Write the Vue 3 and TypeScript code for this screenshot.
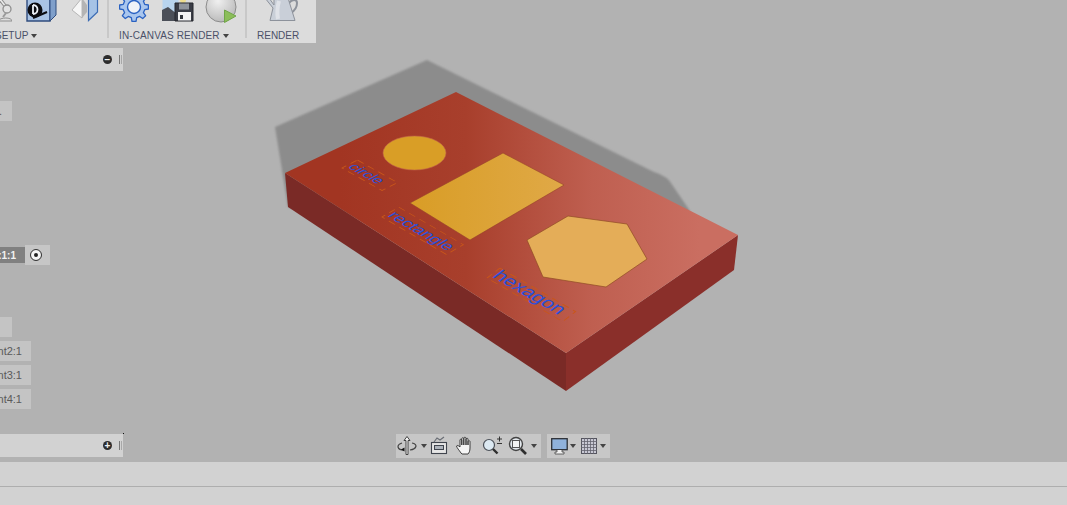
<script setup lang="ts">
interface Engraving {
  label: string;
  matrix: string;
  w: number;
  h: number;
  size: number;
}

// text sits on the top face of the board, so each label gets its own skew
const engravings: Engraving[] = [
  { label: 'circle', matrix: 'matrix(0.87 0.49 -0.86 0.44 342 168)', w: 46, h: 18, size: 15 },
  { label: 'rectangle', matrix: 'matrix(0.86 0.5 -0.8 0.47 382 217)', w: 75, h: 21, size: 17 },
  { label: 'hexagon', matrix: 'matrix(0.87 0.5 -0.72 0.55 487 278)', w: 87, h: 18, size: 20 },
];

const treeRows = ['Component2:1', 'Component3:1', 'Component4:1'];

// 8 teeth around the centre of the settings icon
function gearPath(cx: number, cy: number, outer: number, inner: number): string {
  const pts: string[] = [];
  for (let i = 0; i < 8; i++) {
    const a = (i / 8) * Math.PI * 2;
    const step = Math.PI / 8;
    const corners: [number, number][] = [
      [inner, a - step * 0.62],
      [outer, a - step * 0.36],
      [outer, a + step * 0.36],
      [inner, a + step * 0.62],
    ];
    for (const [r, t] of corners) {
      pts.push(`${(cx + r * Math.cos(t)).toFixed(1)} ${(cy + r * Math.sin(t)).toFixed(1)}`);
    }
  }
  return `M${pts.join('L')}Z`;
}

const gear = gearPath(15, 7, 14.500, 11);
</script>

<template>
  <div class="app">
    <main class="viewport">
      <svg class="scene" viewBox="0 0 1067 462" width="1067" height="462">
        <defs>
          <linearGradient id="topFace" gradientUnits="userSpaceOnUse" x1="340" y1="190" x2="700" y2="190">
            <stop offset="0" stop-color="#a23522" />
            <stop offset="0.35" stop-color="#a83f2c" />
            <stop offset="0.7" stop-color="#bf5f50" />
            <stop offset="1" stop-color="#ca6e61" />
          </linearGradient>
          <linearGradient id="inlay" gradientUnits="userSpaceOnUse" x1="400" y1="190" x2="650" y2="190">
            <stop offset="0" stop-color="#d89c24" />
            <stop offset="0.5" stop-color="#dea63e" />
            <stop offset="1" stop-color="#e5ae5c" />
          </linearGradient>
          <filter id="soft" x="-5%" y="-5%" width="110%" height="110%">
            <feGaussianBlur stdDeviation="0.8" />
          </filter>
        </defs>

        <path
          d="M275 127L427 60L654 172Q668 176 673 186L690 211L600 260L288 207Z"
          fill="#8c8c8c"
          filter="url(#soft)"
        />
        <polygon points="285,173 566,353 566,391 288,207" fill="#7a2a26" />
        <polygon points="566,353 738,235 734,270 566,391" fill="#8a2f2a" />
        <polygon points="285,173 456,92 738,235 566,353" fill="url(#topFace)" />

        <ellipse cx="414.5" cy="153" rx="31.5" ry="17" fill="#d99e26" stroke="#c0614a" stroke-width="0.6" />
        <polygon points="410,203 503,153 564,185 470,240" fill="url(#inlay)" stroke="#96402a" stroke-width="0.6" />
        <polygon
          points="527,240 568,216 627,224 647,259 606,287 543,277"
          fill="#e4ad58"
          stroke="#8f4a24"
          stroke-width="0.7"
        />

        <g v-for="item in engravings" :key="item.label" :transform="item.matrix">
          <rect
            x="0"
            :y="-item.h"
            :width="item.w"
            :height="item.h"
            fill="none"
            stroke="#c9571a"
            stroke-width="1"
            stroke-dasharray="7 5"
          />
          <text class="engraved" x="2" y="-4" :font-size="item.size">{{ item.label }}</text>
        </g>
      </svg>

      <!-- ribbon, cut off on the left and top like in the app window -->
      <div class="ribbon">
        <section class="group group-setup">
          <div class="icons">
            <svg class="lamp" width="32" height="24" viewBox="0 0 32 24">
              <path d="M19 -2L26 7" stroke="#8f8f8f" stroke-width="3.500" />
              <path d="M19 -2L26 7" stroke="#ececec" stroke-width="1.500" />
              <circle cx="27" cy="9" r="4" fill="#e2e2e2" stroke="#8f8f8f" stroke-width="1.300" />
              <path d="M26 13L23 17" stroke="#9a9a9a" stroke-width="2" />
              <path d="M18 21C20 17 32 17 32 21Z" fill="#dedede" stroke="#8f8f8f" />
            </svg>
            <svg class="cube" width="32" height="23" viewBox="0 0 32 23">
              <path d="M1 -2H24V21H1Z" fill="#a9c3e4" stroke="#2f4c7e" stroke-width="1.400" />
              <path d="M24 21L30 15V-2H24Z" fill="#7f9fca" stroke="#2f4c7e" />
              <circle cx="9" cy="10" r="7.500" fill="#0c0c10" />
              <path d="M7 5V14M7 5C13 5 13 14 7 14" fill="none" stroke="#eef2f8" stroke-width="1.800" />
              <path d="M7 18L21 12" stroke="#0c0c10" stroke-width="2" />
            </svg>
            <svg class="mirror" width="28" height="23" viewBox="0 0 28 23">
              <path d="M1 10L11 -2V18Z" fill="#f6f6f6" stroke="#a8a8a8" stroke-width="0.800" />
              <path d="M11 -2L16 5V12L11 18Z" fill="#b4b4b4" />
              <path d="M17.500 -2H26.500V12L17.500 20.500Z" fill="#a6c3e6" stroke="#3c6cb4" stroke-width="1.200" />
            </svg>
          </div>
          <div class="label">SETUP<i class="caret"></i></div>
        </section>
        <section class="group group-canvas">
          <div class="icons">
            <svg class="gear" width="30" height="23" viewBox="0 0 30 23">
              <path :d="gear" fill="#a9c6ee" stroke="#2a62c2" stroke-width="1.300" stroke-linejoin="round" />
              <circle cx="15" cy="7" r="6.500" fill="#f0f3f8" stroke="#2a62c2" stroke-width="1.400" />
            </svg>
            <svg class="save" width="32" height="22" viewBox="0 0 32 22">
              <rect x="0.500" y="-2" width="16" height="23" fill="#b8d4ee" />
              <circle cx="21" cy="0" r="3" fill="#eddc8e" />
              <path d="M0 21V10L6 7L15 14V21Z" fill="#4b4f58" />
              <path d="M13 3H31V21H13Z" fill="#3a3d46" stroke="#24262c" />
              <rect x="17" y="3.500" width="10" height="6" fill="#8f949c" />
              <rect x="16" y="12" width="13" height="8.500" fill="#f2f2f2" />
              <rect x="18" y="15" width="3" height="4" fill="#33363c" />
            </svg>
            <svg class="sphere" width="32" height="24" viewBox="0 0 32 24">
              <defs>
                <radialGradient id="ball" cx="0.4" cy="0.3" r="0.8">
                  <stop offset="0" stop-color="#f0f0f0" />
                  <stop offset="1" stop-color="#b4b4b4" />
                </radialGradient>
              </defs>
              <circle cx="16" cy="7" r="15" fill="url(#ball)" stroke="#8c8c8c" />
              <path d="M19.500 10L31 16L19.500 22.500Z" fill="#8cbe5a" stroke="#70a548" />
            </svg>
          </div>
          <div class="label">IN-CANVAS RENDER<i class="caret"></i></div>
        </section>
        <section class="group group-render">
          <div class="icons">
            <svg class="pot" width="34" height="23" viewBox="0 0 34 23">
              <path d="M25 3C28 -1 33 -1 33 3C33 8 30 11 27 13" fill="none" stroke="#8d929b" stroke-width="2" />
              <path d="M1 -2H5L10 5L10 -2H24L31 20.500H6L9 8Z" fill="#c9cfd8" stroke="#8d929b" />
              <path d="M15 1C13 8 13 14 14 19" stroke="#dfe2e8" stroke-width="4" fill="none" />
            </svg>
          </div>
          <div class="label">RENDER</div>
        </section>
      </div>

      <!-- browser tree -->
      <aside class="tree">
        <div class="panel-head">
          <span class="round-btn">−</span>
          <span class="grip"></span>
        </div>
        <div class="row row-short row-first"><span>Origin.</span></div>
        <div class="row-active">
          <span class="active-name">Base:1:1</span>
          <span class="target"><b></b></span>
        </div>
        <div class="row row-short row-comp"></div>
        <div v-for="name in treeRows" :key="name" class="row row-wide">
          <span>{{ name }}</span>
        </div>
        <div class="panel-head panel-foot">
          <span class="round-btn">+</span>
          <span class="grip"></span>
        </div>
      </aside>

      <!-- navigation bar -->
      <nav class="navbar">
        <div class="nav-group nav-main">
          <svg class="orbit" width="20" height="20" viewBox="0 0 20 20">
            <path d="M5 7C-1 9 0 14 7 14M15 7C21 8 20 13 13 14" fill="none" stroke="#444" stroke-width="1.200" />
            <path d="M10 0.500L7 4.500H9V18.500H11V4.500H13Z" fill="#f4f4f4" stroke="#333" stroke-width="0.900" />
            <path d="M7.500 11.500V15.500L4 13.500Z" fill="#111" />
          </svg>
          <i class="caret c-orbit"></i>
          <svg class="film" width="20" height="20" viewBox="0 0 20 20">
            <rect x="2.500" y="6.500" width="15" height="11" fill="#e6e6e6" stroke="#40454e" stroke-width="1.100" />
            <rect x="5.500" y="9.500" width="9" height="4" fill="#aeb4bc" stroke="#40454e" />
            <path d="M5 6L8 2L11 4L15 1" fill="none" stroke="#6b6f76" stroke-width="1.200" />
          </svg>
          <svg class="hand" width="20" height="20" viewBox="0 0 20 20">
            <path
              d="M6 17C4 14 2 12 1.500 10C2 9 3.500 9.500 5 11V4C5 3 6.500 3 6.800 4V9V2.500C7 1.500 8.500 1.500 8.800 2.500V9V2C9 1 10.800 1 11 2V9V3C11.200 2 13 2 13 3V9V5.500C13.200 4.500 15 4.500 15 5.500V12C15 15 14 17 13 18H7Z"
              fill="#f6f6f6"
              stroke="#2e2e2e"
              stroke-width="0.900"
            />
          </svg>
          <svg class="zoom-pm" width="22" height="20" viewBox="0 0 22 20">
            <circle cx="8" cy="9" r="5.500" fill="#dce9f2" stroke="#4a4f57" stroke-width="1.200" />
            <path d="M12 13L16.500 17.500" stroke="#2e2e2e" stroke-width="2.400" />
            <path d="M16 3H21M18.500 0.500V5.500M16 7.500H21" stroke="#333" stroke-width="1" />
          </svg>
          <svg class="zoom-win" width="20" height="20" viewBox="0 0 20 20">
            <circle cx="8" cy="8" r="6.500" fill="#e4e9ee" stroke="#444" stroke-width="1.400" />
            <rect x="4.500" y="4.500" width="7" height="7" fill="#f3f3f3" stroke="#555" />
            <path d="M13 13L18 18" stroke="#2e2e2e" stroke-width="2.600" />
          </svg>
          <i class="caret c-zoom"></i>
        </div>
        <div class="nav-group nav-display">
          <svg class="display" width="17" height="18" viewBox="0 0 17 18">
            <rect x="0.700" y="1.700" width="15.500" height="11" fill="#8fb2dc" stroke="#2b2f36" stroke-width="1.300" />
            <path d="M6 13V15H4V17H13V15H11V13" fill="#f0f0f0" stroke="#444" stroke-width="0.800" />
          </svg>
          <i class="caret c-display"></i>
          <svg class="grid-icon" width="16" height="16" viewBox="0 0 16 16">
            <rect x="0.500" y="0.500" width="15" height="15" fill="#c8c8d4" stroke="#55555f" />
            <path d="M3.500 0V16M6.500 0V16M9.500 0V16M12.500 0V16M0 3.500H16M0 6.500H16M0 9.500H16M0 12.500H16" stroke="#63636e" stroke-width="0.800" />
          </svg>
          <i class="caret c-grid"></i>
        </div>
      </nav>
    </main>
    <footer class="status-bar"></footer>
    <footer class="time-bar"></footer>
  </div>
</template>

<style scoped>
.app {
  display: flex;
  flex-direction: column;
  width: 1067px;
  height: 505px;
  overflow: hidden;
  font-family: "Liberation Sans", Arial, sans-serif;
}

.viewport {
  position: relative;
  height: 462px;
  background: #b2b2b2;
  overflow: hidden;
}

.scene {
  display: block;
}

.engraved {
  font-family: "Liberation Sans", Arial, sans-serif;
  fill: #2a50dc;
}

.ribbon {
  position: absolute;
  top: 0;
  left: 0;
  display: flex;
  width: 316px;
  height: 43px;
  background: #dcdcdc;
}

.group {
  flex: none;
  height: 38px;
  border-right: 2px solid #c8c8c8;
}

.group-setup {
  width: 107px;
}

.group-canvas {
  width: 136px;
}

.group-render {
  flex: 1;
  border-right: none;
}

.icons {
  display: flex;
  align-items: flex-start;
  height: 26px;
}

.lamp {
  flex: none;
  margin-left: -20px;
}

.cube {
  margin-left: 14px;
}

.mirror {
  margin-left: 13px;
}

.gear {
  margin-left: 10px;
}

.save {
  margin-left: 13px;
}

.sphere {
  margin-left: 11px;
}

.pot {
  margin-left: 17px;
}

.label {
  display: flex;
  align-items: center;
  height: 13px;
  margin-top: 3px;
  font-size: 10px;
  color: #4b5068;
  white-space: nowrap;
}

.group-setup .label {
  margin-left: -5px;
}

.group-canvas .label {
  margin-left: 10px;
  letter-spacing: 0.12px;
}

.group-render .label {
  margin-left: 10px;
}

.caret {
  display: inline-block;
  flex: none;
  width: 0;
  height: 0;
  margin-left: 3px;
  border-left: 3.500px solid transparent;
  border-right: 3.500px solid transparent;
  border-top: 4px solid #444;
}

.tree {
  position: absolute;
  top: 48px;
  left: 0;
  display: flex;
  flex-direction: column;
  align-items: flex-start;
  width: 124px;
  height: 409px;
}

.panel-head {
  position: relative;
  display: flex;
  align-items: center;
  justify-content: flex-end;
  gap: 7px;
  width: 123px;
  height: 23px;
  padding-right: 1px;
  box-sizing: border-box;
  background: #d2d2d2;
}

.panel-foot {
  margin-top: auto;
}

.panel-foot::after {
  content: "";
  position: absolute;
  top: -1px;
  right: -1px;
  width: 1px;
  height: 1px;
  background: #111;
}

.round-btn {
  display: flex;
  align-items: center;
  justify-content: center;
  width: 9px;
  height: 9px;
  border-radius: 50%;
  background: #2c2c2c;
  color: #f0f0f0;
  font-size: 10px;
  font-weight: bold;
  line-height: 1;
}

.grip {
  width: 1px;
  height: 9px;
  border-left: 1px solid #777;
  border-right: 1px solid #a8a8a8;
}

.row {
  display: flex;
  justify-content: flex-end;
  align-items: center;
  height: 20px;
  padding-right: 9px;
  box-sizing: border-box;
  overflow: hidden;
  background: #c4c4c4;
  color: #5a5a5a;
  font-size: 11px;
  white-space: nowrap;
}

.row-short {
  width: 12px;
  padding-right: 10px;
}

.row-wide {
  width: 31px;
  margin-top: 4px;
}

.row-first {
  margin-top: 30px;
}

.row-comp {
  margin-top: 52px;
}

.row-active {
  display: flex;
  align-items: center;
  margin-top: 124px;
  height: 20px;
}

.active-name {
  display: flex;
  justify-content: flex-end;
  align-items: center;
  width: 25px;
  height: 16px;
  padding-right: 9px;
  box-sizing: border-box;
  overflow: hidden;
  background: #808080;
  color: #f2f2f2;
  font-size: 10px;
  font-weight: bold;
  white-space: nowrap;
}

.target {
  display: flex;
  align-items: center;
  justify-content: center;
  width: 25px;
  height: 20px;
  padding-right: 3px;
  box-sizing: border-box;
  background: #c6c6c6;
}

.target b {
  display: block;
  width: 4px;
  height: 4px;
  border: 3px solid #f4f4f4;
  border-radius: 50%;
  background: #222;
  outline: 1.500px solid #333;
}

.navbar {
  position: absolute;
  top: 434px;
  left: 396px;
  display: flex;
  gap: 6px;
}

.nav-group {
  display: flex;
  align-items: center;
  height: 24px;
  background: #c7c7c7;
}

.nav-group svg {
  flex: none;
}

.nav-main {
  width: 145px;
}

.nav-display {
  width: 63px;
}

.orbit {
  margin-left: 1px;
}

.c-orbit {
  margin-left: 4px;
}

.film {
  margin-left: 2px;
}

.hand {
  margin-left: 6px;
}

.zoom-pm {
  margin-left: 6px;
}

.zoom-win {
  margin-left: 5px;
}

.c-zoom {
  margin-left: 3px;
}

.display {
  margin-left: 4px;
}

.c-display {
  margin-left: 2px;
}

.grid-icon {
  margin-left: 5px;
}

.c-grid {
  margin-left: 3px;
}

.status-bar {
  height: 24px;
  background: #d2d2d2;
  border-bottom: 1px solid #aeaeae;
  box-sizing: content-box;
}

.time-bar {
  flex: 1;
  background: #d2d2d2;
}
</style>
